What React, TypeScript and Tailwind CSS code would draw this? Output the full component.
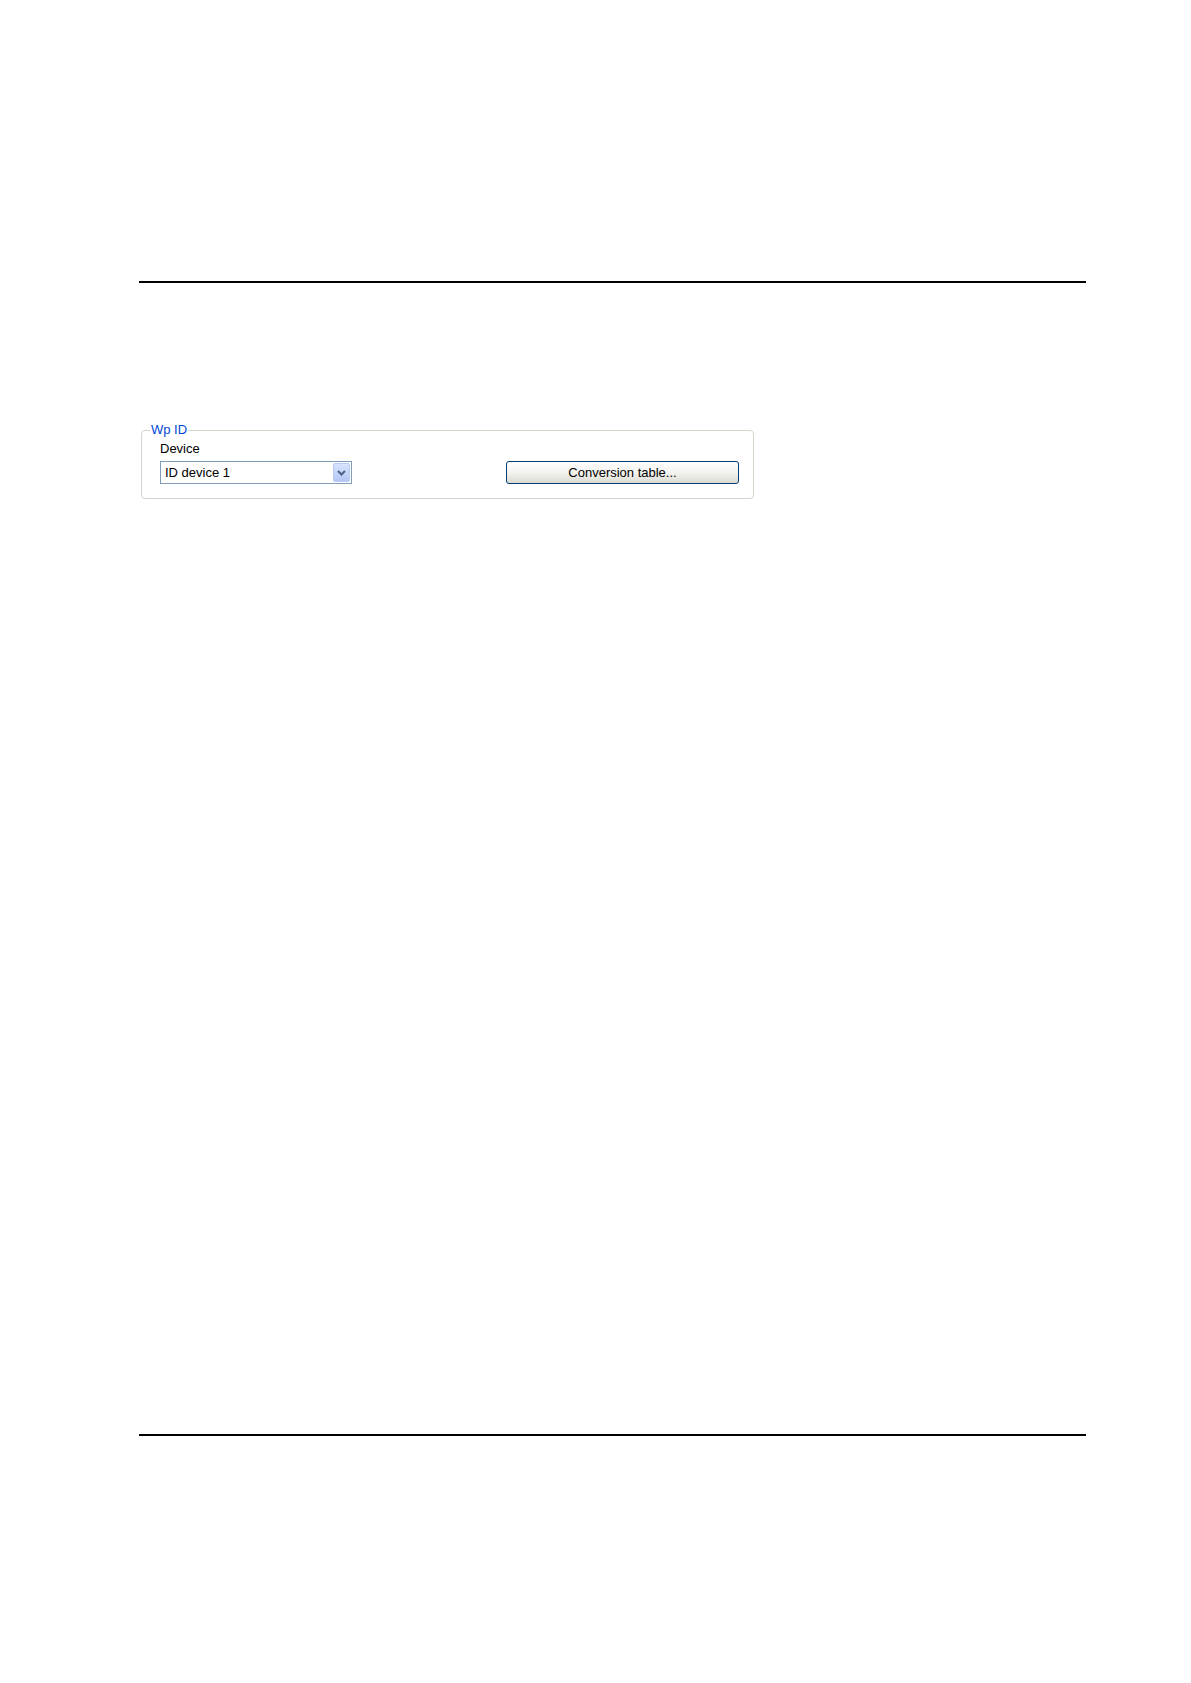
import React from 'react';

function ComboBox({ value }: { value: string }) {
  return (
    <div className="flex h-[23px] w-[192px] items-center border border-[#7f9db9] bg-white">
      <span className="flex-1 pl-[4px] text-[13px] leading-[16px] text-black">{value}</span>
      <div className="mr-[1px] flex h-[19px] w-[17px] items-center justify-center rounded-[2px] border border-[#b9cbf3] bg-gradient-to-b from-[#d8e4fd] to-[#b3c8f7]">
        <svg width="9" height="6" viewBox="0 0 9 6">
          <path d="M1 1 L4.5 4.5 L8 1" fill="none" stroke="#4d6185" strokeWidth="2" />
        </svg>
      </div>
    </div>
  );
}

export default function App() {
  return (
    <div className="min-h-[1683px] bg-white" style={{ fontFamily: '"Liberation Sans", Arial, sans-serif' }}>
      <div className="ml-[139px] w-[947px] pt-[281px]">
        <div className="h-[2px] bg-black" />

        <fieldset className="ml-[2px] mt-[139px] w-[613px] rounded-[4px] border border-[#d5d5cc] px-[8px] pb-[14px]">
          <legend className="px-[1px] text-[13px] leading-[16px] text-[#0046d5]">Wp ID</legend>
          <div className="flex items-end justify-between pl-[10px] pr-[6px] pt-[3px]">
            <div className="flex flex-col gap-[4px]">
              <span className="text-[13px] leading-[16px] text-black">Device</span>
              <ComboBox value="ID device 1" />
            </div>
            <button className="h-[23px] w-[233px] rounded-[3px] border border-[#003c74] bg-gradient-to-b from-[#ffffff] via-[#f3f3ef] to-[#dcdcd4] text-[13px] leading-[16px] text-black">
              Conversion table...
            </button>
          </div>
        </fieldset>

        <div className="mt-[935px] h-[2px] bg-black" />
      </div>
    </div>
  );
}
